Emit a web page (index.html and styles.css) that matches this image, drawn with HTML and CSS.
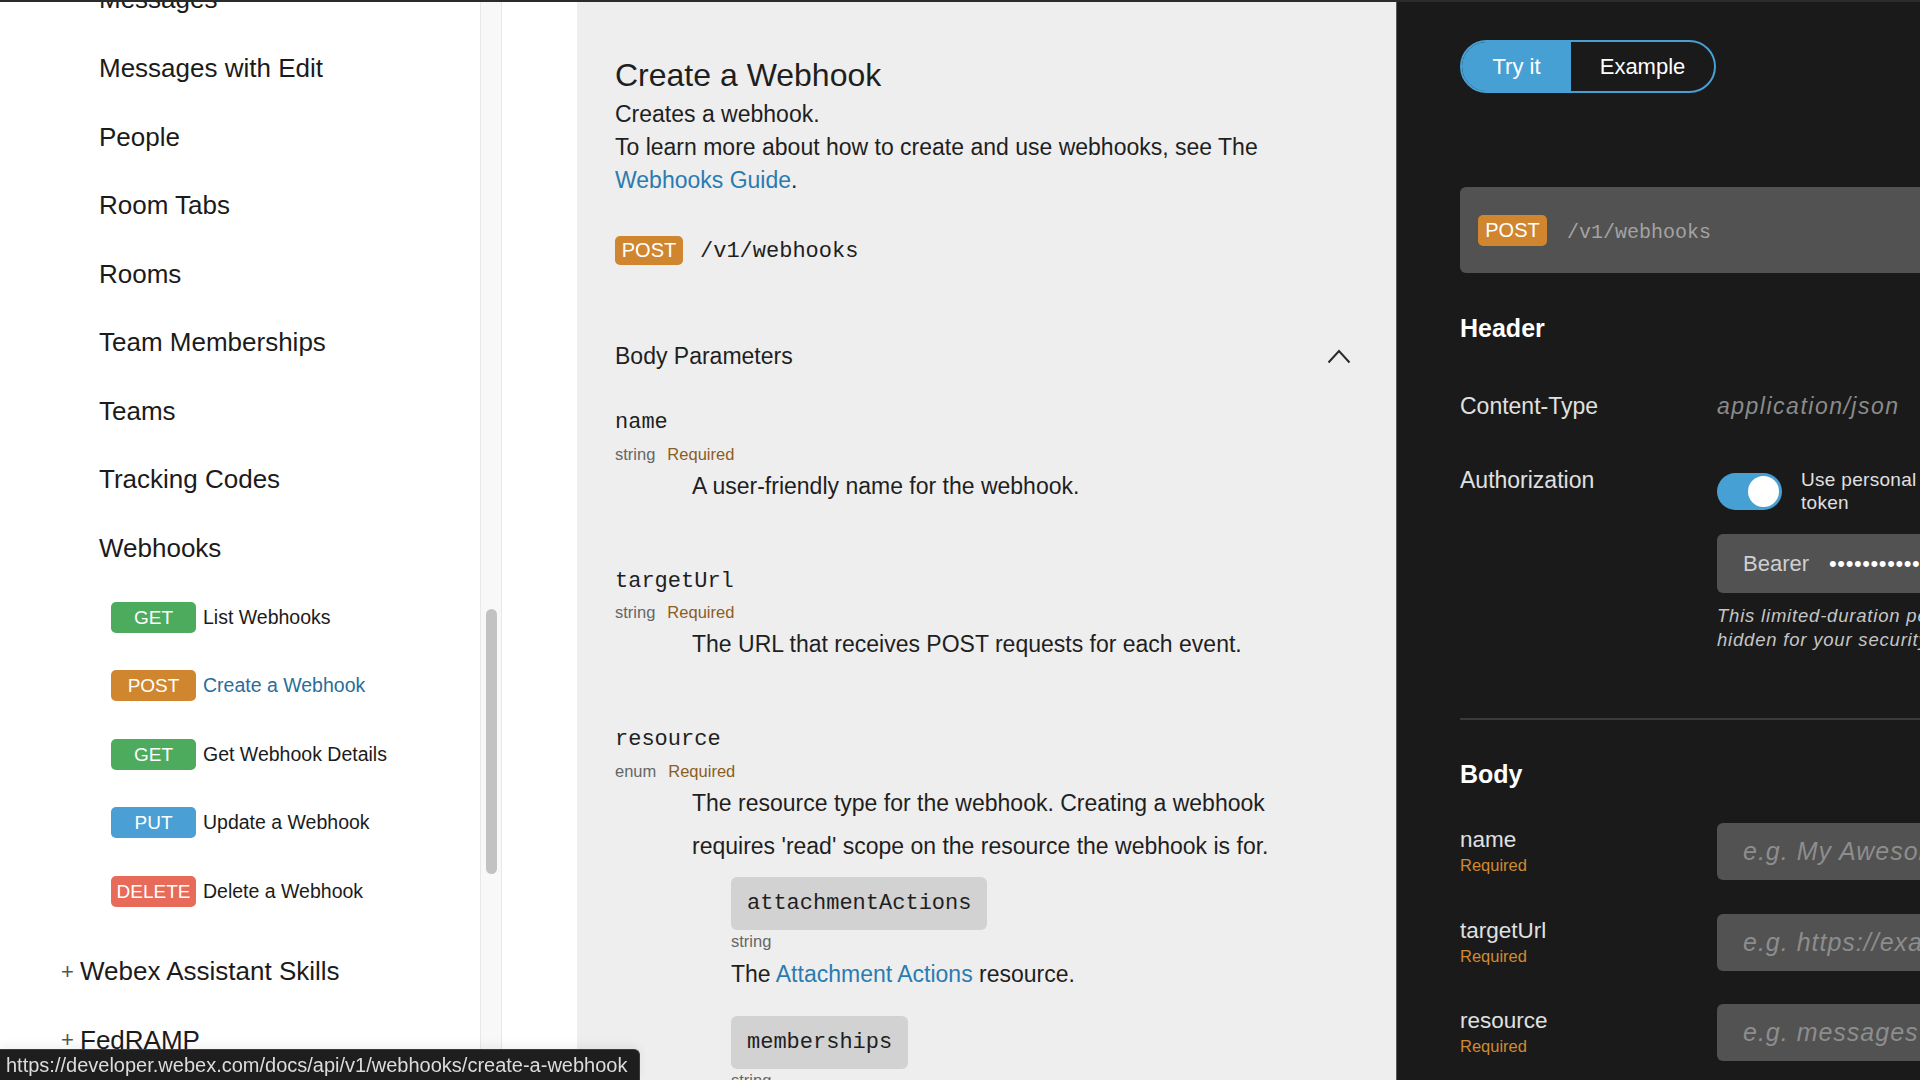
FILE: index.html
```html
<!DOCTYPE html>
<html lang="en">
<head>
<meta charset="utf-8">
<title>Create a Webhook</title>
<link rel="stylesheet" href="styles.css">
</head>
<body>
<div class="topline"></div>
<div class="main">
  <aside class="sidebar">
    <ul class="nav">
      <li class="nav-item">Messages</li>
      <li class="nav-item">Messages with Edit</li>
      <li class="nav-item">People</li>
      <li class="nav-item">Room Tabs</li>
      <li class="nav-item">Rooms</li>
      <li class="nav-item">Team Memberships</li>
      <li class="nav-item">Teams</li>
      <li class="nav-item">Tracking Codes</li>
      <li class="nav-item">Webhooks</li>
      <li class="sub-item"><span class="badge get">GET</span><span>List Webhooks</span></li>
      <li class="sub-item"><span class="badge post">POST</span><span class="active">Create a Webhook</span></li>
      <li class="sub-item"><span class="badge get">GET</span><span>Get Webhook Details</span></li>
      <li class="sub-item"><span class="badge put">PUT</span><span>Update a Webhook</span></li>
      <li class="sub-item"><span class="badge del">DELETE</span><span>Delete a Webhook</span></li>
      <li class="group first"><span class="plus">+</span>Webex Assistant Skills</li>
      <li class="group"><span class="plus">+</span>FedRAMP</li>
    </ul>
  </aside>
  <div class="track"><div class="thumb"></div></div>
  <div class="gutter"></div>
  <main class="doc">
    <h1>Create a Webhook</h1>
    <div class="lead">
      <p>Creates a webhook.</p>
      <p>To learn more about how to create and use webhooks, see The</p>
      <p><a href="#">Webhooks Guide</a>.</p>
    </div>
    <div class="endpoint"><span class="badge post">POST</span><span class="path">/v1/webhooks</span></div>
    <div class="section-head">
      <span>Body Parameters</span>
      <svg class="chev" width="24" height="15" viewBox="0 0 24 15"><polyline points="1.5,13.5 12,2 22.5,13.5" fill="none" stroke="#2a2a2a" stroke-width="2"/></svg>
    </div>

    <div class="param first">
      <div class="param-name">name</div>
      <div class="meta"><span>string</span><span class="req">Required</span></div>
      <div class="desc">A user-friendly name for the webhook.</div>
    </div>
    <div class="param">
      <div class="param-name">targetUrl</div>
      <div class="meta"><span>string</span><span class="req">Required</span></div>
      <div class="desc">The URL that receives POST requests for each event.</div>
    </div>
    <div class="param">
      <div class="param-name">resource</div>
      <div class="meta"><span>enum</span><span class="req">Required</span></div>
      <div class="desc">The resource type for the webhook. Creating a webhook requires 'read' scope on the resource the webhook is for.</div>
      <div class="enum-item">
        <span class="chip">attachmentActions</span>
        <div class="enum-type">string</div>
        <div class="enum-desc">The <a href="#">Attachment Actions</a> resource.</div>
      </div>
      <div class="enum-item second">
        <span class="chip">memberships</span>
        <div class="enum-type">string</div>
      </div>
    </div>
  </main>
  <section class="tryit">
    <div class="panel">
      <div class="seg"><span class="on">Try it</span><span class="off">Example</span></div>
      <div class="urlbar"><span class="badge post">POST</span><span class="path">/v1/webhooks</span></div>
      <h2 class="hd">Header</h2>
      <div class="row row-ct">
        <div class="label">Content-Type</div>
        <div class="ph">application/json</div>
      </div>
      <div class="row row-auth">
        <div class="label">Authorization</div>
        <div class="auth-val">
          <div class="auth-top">
            <div class="switch"><span class="knob"></span></div>
            <div class="switch-text">Use personal token</div>
          </div>
          <div class="bearer"><span>Bearer</span><span class="dots">••••••••••••••••••••••</span></div>
          <div class="note">
            <div>This limited-duration personal access token is</div>
            <div>hidden for your security.</div>
          </div>
        </div>
      </div>
      <div class="divider"></div>
      <h2 class="hd body-hd">Body</h2>
      <div class="field first">
        <div><div class="field-label">name</div><div class="freq">Required</div></div>
        <div class="input">e.g. My Awesome Webhook</div>
      </div>
      <div class="field">
        <div><div class="field-label">targetUrl</div><div class="freq">Required</div></div>
        <div class="input">e.g. https://example.com/mywebhook</div>
      </div>
      <div class="field">
        <div><div class="field-label">resource</div><div class="freq">Required</div></div>
        <div class="input">e.g. messages</div>
      </div>
    </div>
  </section>
</div>
<div class="status">https://developer.webex.com/docs/api/v1/webhooks/create-a-webhook</div>
</body>
</html>
```

FILE: styles.css
```css
html, body {
  margin: 0;
  padding: 0;
}
body {
  width: 1920px;
  height: 1080px;
  overflow: hidden;
  background: #fff;
  font-family: "Liberation Sans", Arial, sans-serif;
  color: #1b1b1b;
}
.topline {
  height: 2px;
  background: #2b2b2b;
}
.main {
  display: flex;
  height: 1078px;
  overflow: hidden;
}

/* Sidebar */
.sidebar {
  width: 480px;
  flex: none;
  overflow: hidden;
  background: #fff;
}
.nav {
  list-style: none;
  margin: -36.3px 0 0;
  padding: 0;
}
.nav li {
  height: 68.57px;
  display: flex;
  align-items: center;
  color: #1b1b1b;
  white-space: nowrap;
}
.nav-item {
  padding-left: 99px;
  font-size: 26px;
}
.sub-item {
  padding-left: 111px;
  font-size: 19.5px;
  gap: 7px;
}
.group {
  padding-left: 61px;
  font-size: 26px;
}
.group.first {
  margin-top: 12px;
}
.plus {
  width: 19px;
  font-size: 22px;
  color: #555;
}
.active {
  color: #2a6d9a;
}

.badge {
  display: inline-block;
  box-sizing: border-box;
  min-width: 85px;
  height: 31px;
  line-height: 31px;
  padding: 0 5px;
  text-align: center;
  color: #fff;
  border-radius: 5px;
  font-size: 19px;
}
.get { background: #4cab5c; }
.post { background: #d0862f; }
.put { background: #4a9fd4; }
.del { background: #e86a58; }

/* scrollbar */
.track {
  width: 20px;
  flex: none;
  background: #f8f8f8;
  border-left: 1px solid #e8e8e8;
  border-right: 1px solid #e8e8e8;
  padding-top: 607px;
  box-sizing: content-box;
}
.thumb {
  width: 11px;
  height: 265px;
  margin-left: 5px;
  border-radius: 6px;
  background: #c2c2c2;
}
.gutter {
  width: 75px;
  flex: none;
  background: #fff;
}

/* Doc column */
.doc {
  width: 820px;
  flex: none;
  box-sizing: border-box;
  padding: 53px 48px 0 38px;
  background: #eeeeee;
  border-right: 1px solid #5a5a5a;
  overflow: hidden;
  color: #1f1f1f;
}
.doc h1 {
  font-size: 32px;
  line-height: 40px;
  font-weight: normal;
  margin: 0 0 3px;
}
.lead p {
  font-size: 23px;
  line-height: 33px;
  margin: 0;
}
a {
  color: #2b7bb0;
  text-decoration: none;
}
.endpoint {
  display: flex;
  align-items: center;
  gap: 17px;
  height: 29px;
  margin-top: 39px;
}
.endpoint .badge {
  min-width: 68px;
  height: 29px;
  line-height: 29px;
  font-size: 20px;
}
.path {
  font-family: "Liberation Mono", "Courier New", monospace;
  font-size: 22px;
}
.endpoint .path {
  padding-top: 2px;
}
.section-head {
  display: flex;
  justify-content: space-between;
  align-items: center;
  height: 30px;
  margin-top: 76px;
  font-size: 23px;
}
.chev {
  margin-right: -3px;
}
.param {
  margin-top: 60px;
}
.param.first {
  margin-top: 38px;
}
.param-name {
  font-family: "Liberation Mono", "Courier New", monospace;
  font-size: 22px;
  line-height: 28px;
}
.meta {
  display: flex;
  gap: 12px;
  margin-top: 6.5px;
  font-size: 16.5px;
  line-height: 20px;
  color: #666;
}
.meta .req {
  color: #8c5d1f;
}
.desc {
  margin: 1px 0 0 77px;
  max-width: 640px;
  font-size: 23px;
  line-height: 43px;
}
.enum-item {
  margin-left: 116px;
  margin-top: 9.5px;
}
.enum-item.second {
  margin-top: 25px;
}
.chip {
  display: inline-block;
  height: 53px;
  line-height: 53px;
  padding: 0 16px;
  background: #d2d2d2;
  border-radius: 6px;
  font-family: "Liberation Mono", "Courier New", monospace;
  font-size: 22px;
  vertical-align: top;
}
.enum-type {
  margin-top: 1px;
  font-size: 16.5px;
  line-height: 20px;
  color: #666;
}
.enum-desc {
  margin-top: 6.5px;
  font-size: 23px;
  line-height: 33px;
}

/* Try it column */
.tryit {
  flex: 1;
  min-width: 0;
  box-sizing: border-box;
  padding: 38px 0 0 63px;
  background: #1a1a1a;
  overflow: hidden;
  color: #e0e0e0;
}
.panel {
  width: 620px;
}
.seg {
  display: inline-flex;
  box-sizing: border-box;
  height: 53px;
  border: 2px solid #47a0d4;
  border-radius: 27px;
  overflow: hidden;
  font-size: 22px;
}
.seg span {
  display: flex;
  align-items: center;
  justify-content: center;
  color: #fff;
}
.seg .on {
  width: 109px;
  background: #47a0d4;
}
.seg .off {
  width: 143px;
}
.urlbar {
  display: flex;
  align-items: center;
  gap: 20px;
  height: 86px;
  margin-top: 94px;
  padding-left: 18px;
  background: #525252;
  border-radius: 6px;
}
.urlbar .badge {
  min-width: 69px;
  font-size: 20px;
}
.urlbar .path {
  color: #a3a3a3;
  font-size: 20px;
  padding-top: 5px;
}
.hd {
  margin: 39px 0 0;
  font-size: 25px;
  line-height: 32px;
  font-weight: bold;
  color: #fff;
}
.row {
  display: grid;
  grid-template-columns: 257px 1fr;
}
.row-ct {
  margin-top: 47px;
}
.row-auth {
  margin-top: 44px;
}
.label {
  font-size: 23px;
  line-height: 30px;
  color: #e0e0e0;
}
.ph {
  font-size: 23px;
  line-height: 30px;
  font-style: italic;
  letter-spacing: 1.5px;
  color: #8b8b8b;
}
.auth-top {
  display: flex;
  align-items: flex-start;
}
.switch {
  display: flex;
  justify-content: flex-end;
  align-items: center;
  box-sizing: border-box;
  flex: none;
  width: 65px;
  height: 37px;
  margin-top: 8px;
  padding-right: 3px;
  border-radius: 19px;
  background: #47a0d4;
}
.knob {
  width: 31px;
  height: 31px;
  border-radius: 50%;
  background: #fff;
}
.switch-text {
  width: 130px;
  margin: 2.5px 0 0 19px;
  font-size: 19px;
  line-height: 23px;
  letter-spacing: 0.3px;
  color: #e0e0e0;
}
.bearer {
  display: flex;
  align-items: center;
  height: 59px;
  margin-top: 20.5px;
  padding-left: 26px;
  background: #525252;
  border-radius: 6px;
  font-size: 22px;
  color: #cfcfcf;
  white-space: nowrap;
  overflow: hidden;
}
.dots {
  margin-left: 20px;
  color: #fff;
  letter-spacing: 0.6px;
}
.note {
  margin-top: 11px;
  font-size: 18.5px;
  line-height: 24px;
  font-style: italic;
  letter-spacing: 0.8px;
  color: #c5c5c5;
  white-space: nowrap;
}
.divider {
  height: 2px;
  margin-top: 66px;
  background: #3b3b3b;
}
.body-hd {
  margin-top: 38px;
}
.field {
  display: grid;
  grid-template-columns: 257px 1fr;
  margin-top: 33.5px;
}
.field.first {
  margin-top: 33px;
}
.field-label {
  margin-top: 4px;
  font-size: 22.5px;
  line-height: 26px;
  color: #e0e0e0;
}
.freq {
  margin-top: 2px;
  font-size: 16.5px;
  line-height: 20px;
  color: #d08a31;
}
.input {
  display: flex;
  align-items: center;
  height: 57px;
  padding-left: 26px;
  background: #525252;
  border-radius: 6px;
  font-size: 25px;
  font-style: italic;
  letter-spacing: 1px;
  color: #8d8d8d;
  white-space: nowrap;
  overflow: hidden;
}

/* Link preview in the corner */
.status {
  position: fixed;
  left: 0;
  bottom: 0;
  box-sizing: border-box;
  width: 640px;
  height: 31px;
  padding-left: 6px;
  background: #1e1e1e;
  border-top: 1px solid #3c3c3c;
  border-right: 1px solid #3c3c3c;
  border-top-right-radius: 6px;
  color: #dcdcdc;
  font-size: 20px;
  line-height: 30px;
  white-space: nowrap;
  box-shadow: 0 -4px 10px rgba(0, 0, 0, 0.06);
}
```
